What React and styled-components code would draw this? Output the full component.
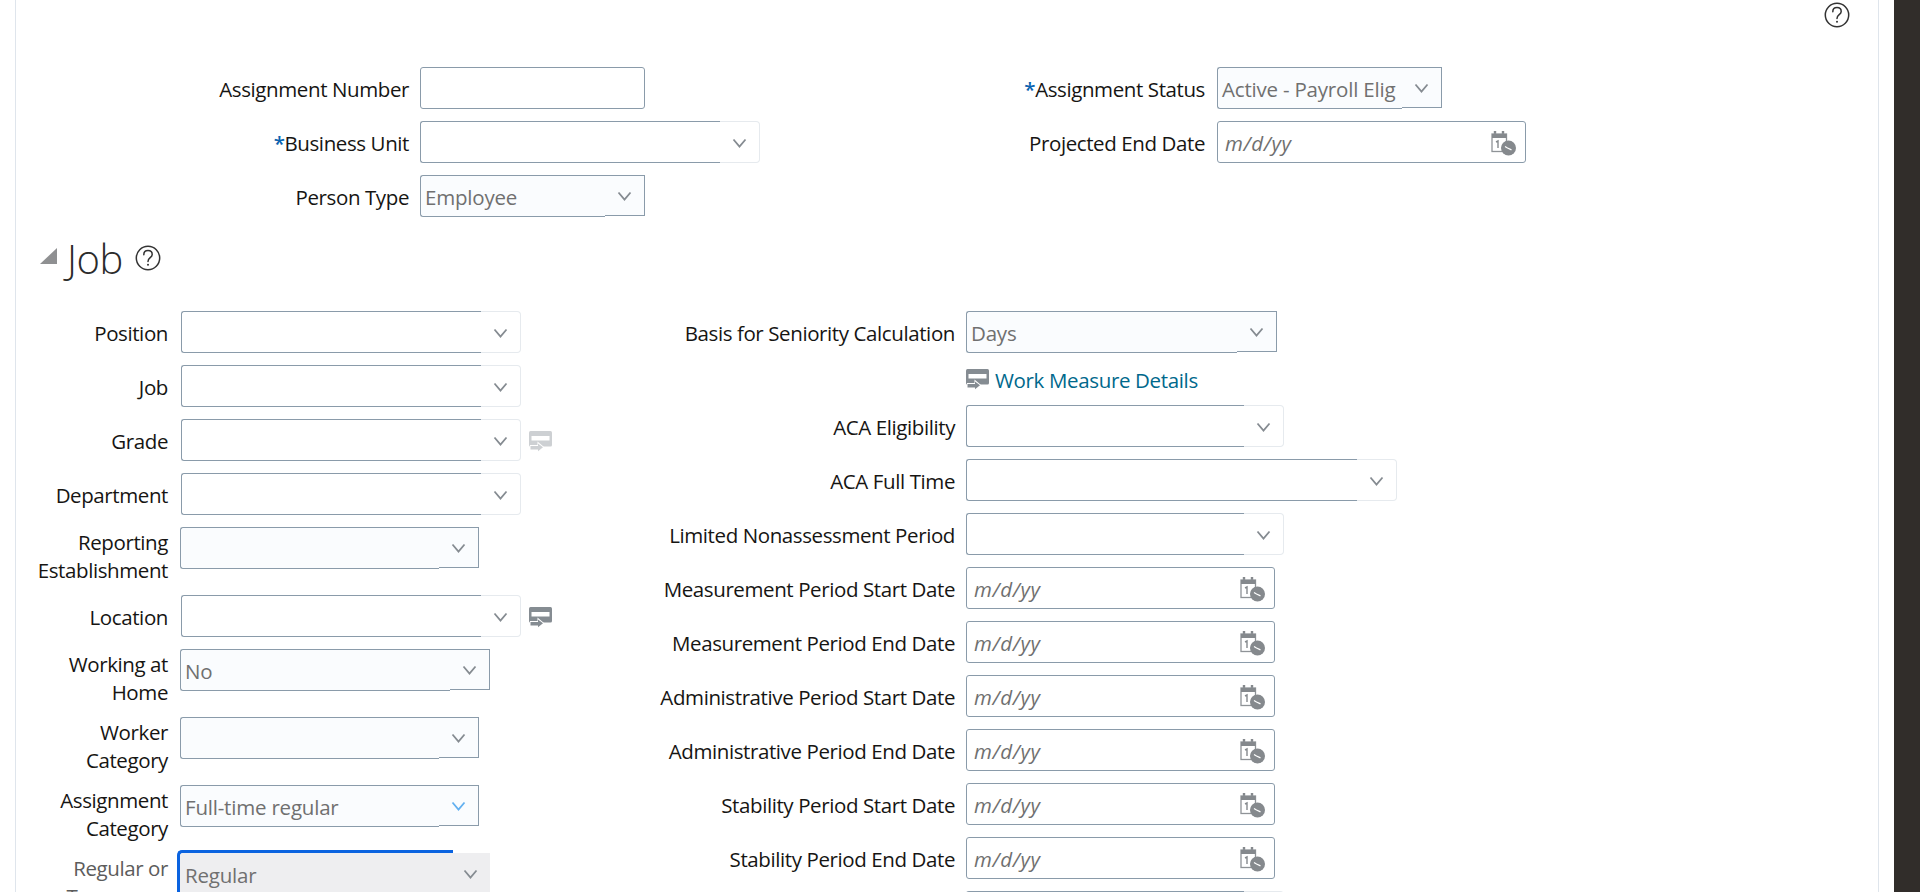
import React from "react";
import styled, { createGlobalStyle } from "styled-components";

const Global = createGlobalStyle`
  html, body { margin: 0; padding: 0; background: #fff; overflow: hidden; }
  body { font-family: "Open Sans", "Noto Sans", sans-serif; color: #161513; }
`;

const Shell = styled.div`
  display: flex;
  width: 1920px;
  height: 892px;
  overflow: hidden;
  padding-left: 15px;
  box-sizing: border-box;
`;
const Panel = styled.main`
  width: 1864px;
  height: 892px;
  flex: none;
  box-sizing: border-box;
  border-left: 1px solid #dfe5ec;
  border-right: 1px solid #dfe5ec;
  overflow: hidden;
`;
const Sidebar = styled.aside`
  flex: 1;
  margin-left: 15px;
  background: #312d2a;
`;
const HelpRow = styled.div`
  height: 67px;
  box-sizing: border-box;
  display: flex;
  justify-content: flex-end;
  padding: 2px 28px 0 0;
`;
const TopForm = styled.div`
  display: flex;
`;
const Column = styled.div`
  width: ${(p) => p.$width}px;
  flex: none;
`;
const Row = styled.div`
  display: grid;
  grid-template-columns: ${(p) => p.$label}px auto;
  column-gap: ${(p) => p.$gap}px;
  justify-content: start;
  align-items: start;
  height: ${(p) => (p.$tall ? 56 : 42)}px;
  margin-bottom: ${(p) => (p.$last ? 0 : 12)}px;
`;
const Label = styled.label`
  font-size: 20.5px;
  letter-spacing: -0.4px;
  line-height: 28px;
  text-align: right;
  white-space: nowrap;
  padding-top: ${(p) => (p.$tall ? 1 : 8)}px;
  color: ${(p) => (p.$muted ? "#5c5c5c" : "#161513")};
`;
const Star = styled.span`
  color: #0a63b0;
  font-weight: 600;
`;
const FieldWrap = styled.div`
  display: flex;
  align-items: flex-start;
  margin-left: ${(p) => p.$nudge || 0}px;
`;
const TextBox = styled.div`
  box-sizing: border-box;
  width: ${(p) => p.$width}px;
  height: 42px;
  background: #fff;
  border: 1px solid #8a9baa;
  border-radius: 3px;
`;
const DateBox = styled(TextBox)`
  display: flex;
  align-items: center;
  justify-content: space-between;
  padding: 2px 9px 0 7px;
`;
const Placeholder = styled.span`
  font-size: 20.5px;
  letter-spacing: 0.6px;
  font-style: italic;
  color: #707070;
`;
const Picker = styled.div`
  display: flex;
  width: ${(p) => p.$width}px;
  height: 42px;
`;
const PickerMain = styled.div`
  flex: 1;
  min-width: 0;
  box-sizing: border-box;
  height: 42px;
  display: flex;
  align-items: center;
  overflow: hidden;
  white-space: nowrap;
  padding: 2px 0 0 4px;
  background: ${(p) => (p.$readonly ? "#fafcfe" : "#fff")};
  border: 1px solid #8a9baa;
  border-right: none;
  border-radius: 3px 0 0 3px;
`;
const PickerToggle = styled.div`
  flex: none;
  width: 40px;
  box-sizing: border-box;
  display: flex;
  align-items: center;
  justify-content: center;
  padding-top: 1px;
  height: ${(p) => (p.$readonly ? 41 : 42)}px;
  background: ${(p) => (p.$readonly ? "#fafcfe" : "#fff")};
  border: 1px solid ${(p) => (p.$readonly ? "#8a9baa" : "#e6eaee")};
  border-left: none;
  border-radius: ${(p) => (p.$readonly ? "0" : "0 4px 4px 0")};
`;
const Value = styled.span`
  font-size: 20.5px;
  letter-spacing: -0.2px;
  color: #707070;
`;
const FocusPicker = styled.div`
  display: flex;
  width: 313px;
  margin: -3px 0 0 -3px;
`;
const FocusMain = styled.div`
  width: 276px;
  height: 48px;
  box-sizing: border-box;
  display: flex;
  align-items: center;
  padding: 0 0 2px 5px;
  background: #eeeef0;
  border-top: 3px solid #0a63e0;
  border-left: 3px solid #0a63e0;
  border-top-left-radius: 5px;
`;
const FocusToggle = styled.div`
  width: 37px;
  height: 42px;
  margin-top: 3px;
  display: flex;
  align-items: center;
  justify-content: center;
  padding-right: 3px;
  box-sizing: border-box;
  background: #eeeef0;
`;
const Heading = styled.div`
  display: flex;
  align-items: flex-start;
  margin: 26px 0 0 24px;
  height: 68px;
`;
const Triangle = styled.span`
  width: 17px;
  height: 16px;
  margin-top: 5px;
  background: #8f9092;
  clip-path: polygon(100% 0, 100% 100%, 0 100%);
`;
const Title = styled.h2`
  margin: -10px 10px 0 10px;
  font-size: 40px;
  line-height: 52px;
  font-weight: 300;
  letter-spacing: -0.4px;
  color: #2b2b2b;
`;
const HeadingHelp = styled.span`
  display: flex;
  margin: 2px 0 0 2px;
`;
const JobForm = styled.div`
  display: flex;
`;
const LinkRow = styled.div`
  display: flex;
  align-items: center;
  gap: 6px;
  box-sizing: border-box;
  height: 28px;
  margin: 0 0 12px 366px;
  padding-top: 2px;
`;
const ItemLink = styled.a`
  color: #00688c;
  font-size: 20.5px;
  letter-spacing: -0.35px;
  line-height: 28px;
`;
const SideIcon = styled.span`
  display: flex;
  margin: 12px 0 0 8px;
  opacity: ${(p) => (p.$disabled ? 0.4 : 1)};
`;

const Chevron = ({ color = "#858b91" }) => (
  <svg width="15" height="10" viewBox="0 0 15 10" fill="none">
    <path d="M1.5 1.5 7.5 8.5 13.5 1.5" stroke={color} strokeWidth="1.8" />
  </svg>
);
const Help = () => (
  <svg width="26" height="26" viewBox="0 0 26 26" fill="none" stroke="#333" strokeWidth="1.5">
    <circle cx="13" cy="13" r="11.7" />
    <path d="M8.8 9.8c0-2.7 1.9-4.2 4.2-4.2s4.2 1.5 4.2 3.8c0 3.400-4.200 3.200-4.200 7" strokeLinecap="round" />
    <circle cx="13" cy="19.800" r="1" fill="#333" stroke="none" />
  </svg>
);
const MeasureIcon = () => (
  <svg width="23" height="22" viewBox="0 0 23 22">
    <rect x="0" y="0" width="23" height="15.500" rx="1.500" fill="#858c92" />
    <rect x="2.500" y="5" width="18" height="4.500" fill="#fff" />
    <path d="M1 14h7.500v-3.500l6.500 5.500-6.500 5.500V18H1z" fill="#fff" />
    <path d="M1.500 15h7.500v-2.500l5 3.800-5 4V18.500H1.500z" fill="#858c92" />
  </svg>
);
const CalendarIcon = () => (
  <svg width="25" height="25" viewBox="0 0 25 25" fill="none">
    <path d="M4 0v4.500M12 0v4.500" stroke="#85898d" strokeWidth="2.4" />
    <rect x="1" y="3" width="14.500" height="17.500" stroke="#8f9397" strokeWidth="1.3" />
    <rect x="1" y="3" width="14.500" height="4" fill="#85898d" />
    <path d="M5 11l2-1v7" stroke="#85898d" strokeWidth="1.4" />
    <circle cx="17.500" cy="17" r="7.500" fill="#85898d" />
    <path d="M16.500 17l4 1.800M14 15.500l2.500 1.500" stroke="#fff" strokeWidth="1.300" />
  </svg>
);

const Combo = ({ width, nudge }) => (
  <FieldWrap $nudge={nudge}>
    <Picker $width={width}>
      <PickerMain />
      <PickerToggle><Chevron /></PickerToggle>
    </Picker>
  </FieldWrap>
);
const Select = ({ width, value, chevron }) => (
  <FieldWrap>
    <Picker $width={width}>
      <PickerMain $readonly>{value && <Value>{value}</Value>}</PickerMain>
      <PickerToggle $readonly><Chevron color={chevron} /></PickerToggle>
    </Picker>
  </FieldWrap>
);
const DateField = ({ width }) => (
  <DateBox $width={width}>
    <Placeholder>m/d/yy</Placeholder>
    <CalendarIcon />
  </DateBox>
);

const L = { $label: 152, $gap: 12 };
const R = { $label: 355, $gap: 11 };
const dateRows = [
  "Measurement Period Start Date",
  "Measurement Period End Date",
  "Administrative Period Start Date",
  "Administrative Period End Date",
  "Stability Period Start Date",
  "Stability Period End Date",
];

export default function App() {
  return (
    <Shell>
      <Global />
      <Panel>
        <HelpRow><Help /></HelpRow>
        <TopForm>
          <Column $width={800}>
            <Row $label={393} $gap={11}>
              <Label>Assignment Number</Label>
              <TextBox $width={225} />
            </Row>
            <Row $label={393} $gap={11}>
              <Label><Star>*</Star>Business Unit</Label>
              <Combo width={340} />
            </Row>
            <Row $label={393} $gap={11} $last>
              <Label>Person Type</Label>
              <Select width={225} value="Employee" />
            </Row>
          </Column>
          <Column $width={800}>
            <Row $label={389} $gap={12}>
              <Label><Star>*</Star>Assignment Status</Label>
              <Select width={225} value="Active - Payroll Elig" />
            </Row>
            <Row $label={389} $gap={12}>
              <Label>Projected End Date</Label>
              <DateField width={309} />
            </Row>
          </Column>
        </TopForm>
        <Heading>
          <Triangle />
          <Title>Job</Title>
          <HeadingHelp><Help /></HeadingHelp>
        </Heading>
        <JobForm>
          <Column $width={584}>
            <Row {...L}><Label>Position</Label><Combo width={340} nudge={1} /></Row>
            <Row {...L}><Label>Job</Label><Combo width={340} nudge={1} /></Row>
            <Row {...L}>
              <Label>Grade</Label>
              <FieldWrap $nudge={1}>
                <Combo width={340} />
                <SideIcon $disabled><MeasureIcon /></SideIcon>
              </FieldWrap>
            </Row>
            <Row {...L}><Label>Department</Label><Combo width={340} nudge={1} /></Row>
            <Row {...L} $tall>
              <Label $tall>Reporting<br />Establishment</Label>
              <Select width={299} />
            </Row>
            <Row {...L}>
              <Label>Location</Label>
              <FieldWrap $nudge={1}>
                <Combo width={340} />
                <SideIcon><MeasureIcon /></SideIcon>
              </FieldWrap>
            </Row>
            <Row {...L} $tall>
              <Label $tall>Working at<br />Home</Label>
              <Select width={310} value="No" />
            </Row>
            <Row {...L} $tall>
              <Label $tall>Worker<br />Category</Label>
              <Select width={299} />
            </Row>
            <Row {...L} $tall>
              <Label $tall>Assignment<br />Category</Label>
              <Select width={299} value="Full-time regular" chevron="#62b0f0" />
            </Row>
            <Row {...L} $tall>
              <Label $tall $muted>Regular or<br />Temporary</Label>
              <FocusPicker>
                <FocusMain><Value>Regular</Value></FocusMain>
                <FocusToggle><Chevron /></FocusToggle>
              </FocusPicker>
            </Row>
          </Column>
          <Column $width={1000}>
            <Row {...R}>
              <Label>Basis for Seniority Calculation</Label>
              <Select width={311} value="Days" />
            </Row>
            <LinkRow>
              <MeasureIcon />
              <ItemLink>Work Measure Details</ItemLink>
            </LinkRow>
            <Row {...R}><Label>ACA Eligibility</Label><Combo width={318} /></Row>
            <Row {...R}><Label>ACA Full Time</Label><Combo width={431} /></Row>
            <Row {...R}><Label>Limited Nonassessment Period</Label><Combo width={318} /></Row>
            {dateRows.map((t) => (
              <Row {...R} key={t}>
                <Label>{t}</Label>
                <DateField width={309} />
              </Row>
            ))}
            <Row {...R}><Label /><Combo width={318} /></Row>
          </Column>
        </JobForm>
      </Panel>
      <Sidebar />
    </Shell>
  );
}
